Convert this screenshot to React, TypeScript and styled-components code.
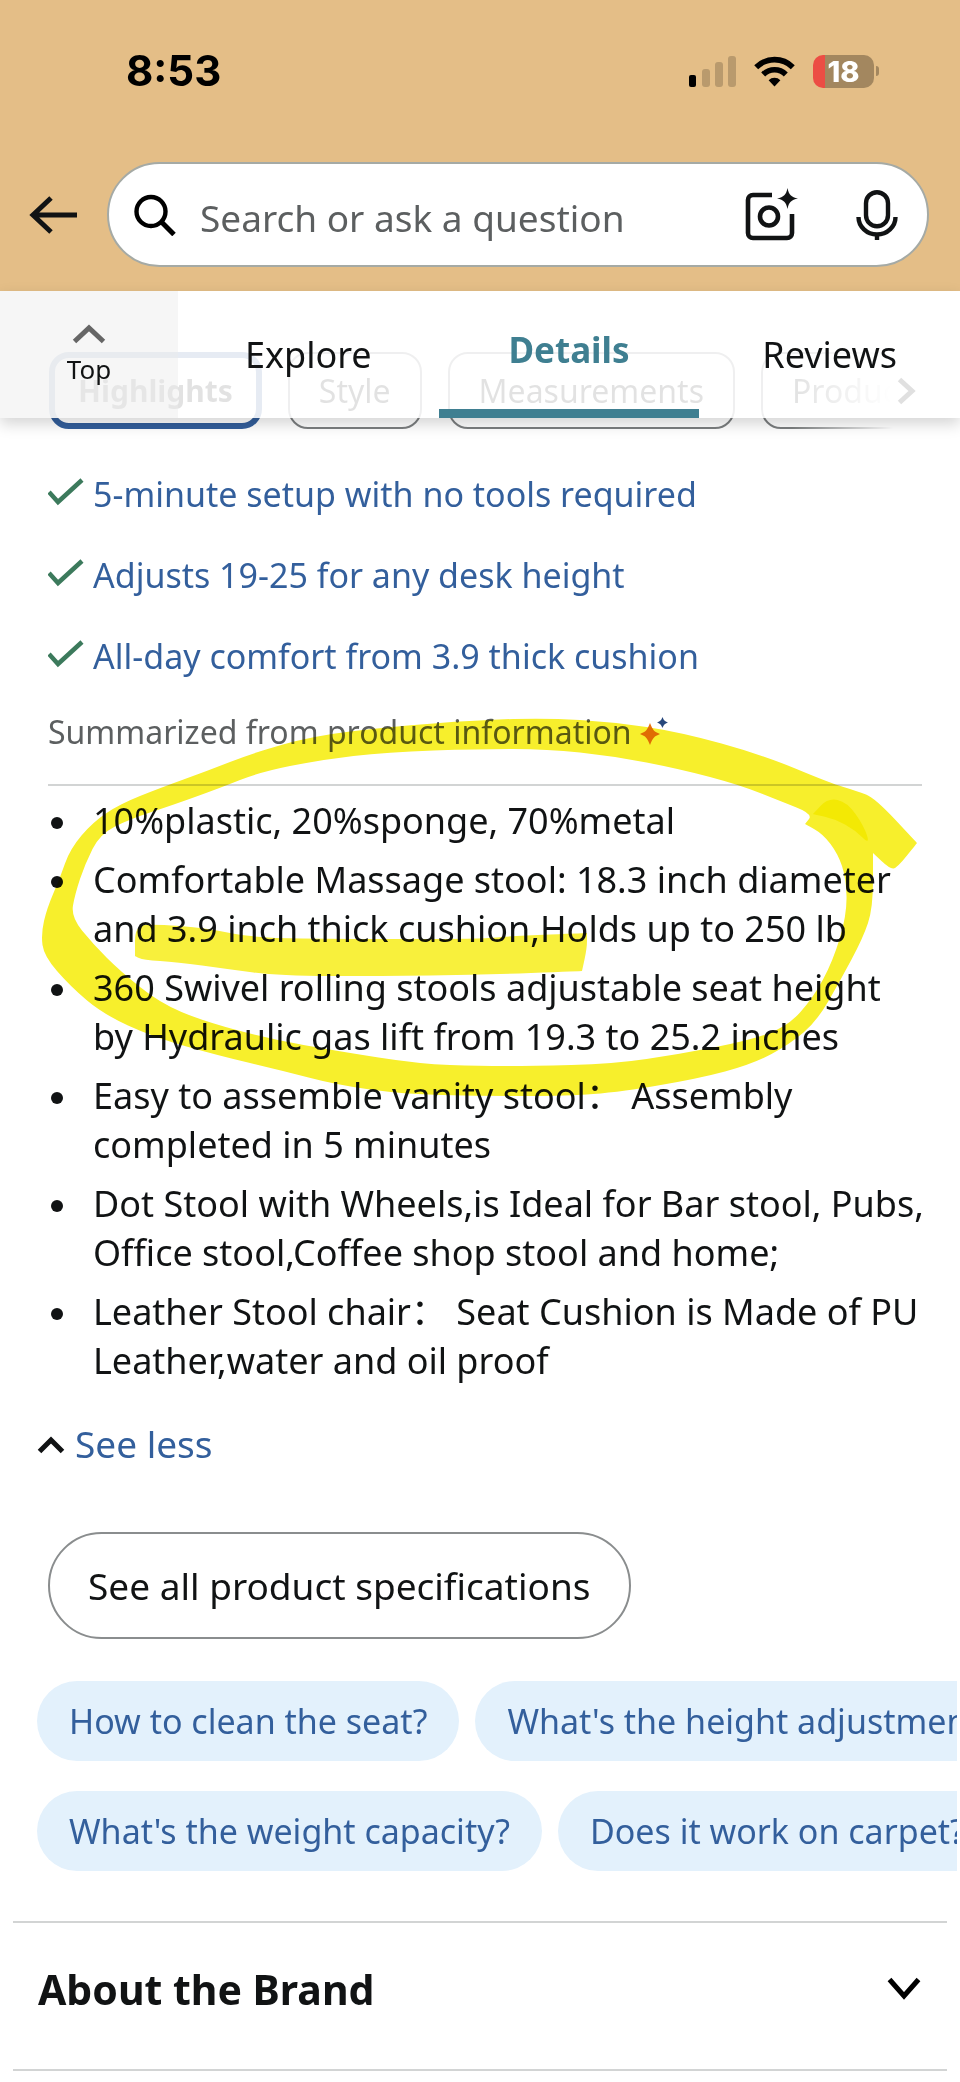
import React from "react";
import styled, { createGlobalStyle, css } from "styled-components";

const ink = "#111314";
const link = "#335f9c";
const teal = "#3f7f91";

const GlobalStyle = createGlobalStyle`
  * { box-sizing: border-box; }
  body {
    margin: 0;
    background: #fff;
    color: ${ink};
    font-family: "Noto Sans", "Noto Sans CJK SC", sans-serif;
  }
  button, input { font: inherit; color: inherit; }
  button { border: 0; padding: 0; background: none; cursor: pointer; }
  svg { display: block; flex: none; }
`;

const Page = styled.div`
  overflow: hidden;
`;

const Header = styled.header`
  background: #e4be87;
  padding-bottom: 24px;
`;

const StatusBar = styled.div`
  display: flex;
  align-items: center;
  justify-content: space-between;
  padding: 46px 81px 66px 126px;
  height: 162px;
`;

const Clock = styled.time`
  color: #000;
  font: 700 42px/50px Inter, sans-serif;
`;

const StatusIcons = styled.div`
  display: flex;
  align-items: center;
  gap: 18px;
`;

const Battery = styled.div`
  display: flex;
  align-items: center;
  gap: 2px;
`;

const BatteryBody = styled.div`
  width: 61px;
  height: 33px;
  border-radius: 10px;
  background: linear-gradient(90deg, #ec4d44 12px, #a3875f 12px);
  color: #fff;
  font: 800 29px/33px Inter, sans-serif;
  text-align: center;
`;

const BatteryTip = styled.span`
  width: 3px;
  height: 10px;
  border-radius: 0 3px 3px 0;
  background: #a3875f;
`;

const SearchRow = styled.div`
  display: flex;
  align-items: center;
  gap: 30px;
  padding: 0 31px 0 29px;
`;

const SearchPill = styled.form`
  flex: 1;
  min-width: 0;
  display: flex;
  align-items: center;
  height: 105px;
  padding: 0 29px 0 25px;
  border: 2px solid #a5aaa5;
  border-radius: 53px;
  background: #fff;
`;

const SearchInput = styled.input`
  flex: 1;
  min-width: 0;
  height: 60px;
  margin: 0 20px 0 24px;
  padding: 5px 0 0;
  border: 0;
  outline: 0;
  background: none;
  font-size: 37px;
  &::placeholder { color: #5c5f60; opacity: 1; }
`;

const MicButton = styled.button`
  margin-left: 57px;
`;

const TabStack = styled.section`
  position: relative;
  padding-top: 61px;
`;

const TabBar = styled.nav`
  position: absolute;
  inset: 0 0 auto;
  height: 127px;
  display: grid;
  grid-template-columns: 178px repeat(3, 1fr);
  background: rgba(255, 255, 255, 0.88);
  box-shadow: 0 6px 14px rgba(0, 0, 0, 0.17);
`;

const TopLink = styled.a`
  display: flex;
  flex-direction: column;
  align-items: center;
  gap: 8px;
  padding: 32px 0 0;
  background: rgba(235, 236, 236, 0.45);
  color: ${ink};
  font-size: 26px;
  line-height: 34px;
  text-decoration: none;
`;

const Tab = styled.a<{ $active?: boolean }>`
  display: flex;
  align-items: center;
  justify-content: center;
  color: ${ink};
  font-size: 36px;
  line-height: 48px;
  text-decoration: none;
  ${p => p.$active && css`
    border-bottom: 9px solid ${teal};
    color: ${teal};
    font-size: 35px;
    font-weight: 700;
  `}
`;

const FilterStrip = styled.div`
  display: flex;
  align-items: center;
  padding: 0 43px 0 49px;
`;

const Filters = styled.div`
  flex: 1;
  min-width: 0;
  display: flex;
  gap: 26px;
  overflow: hidden;
  mask-image: linear-gradient(90deg, #000 calc(100% - 105px), transparent calc(100% - 4px));
`;

const Filter = styled.button<{ $active?: boolean }>`
  flex: none;
  height: 77px;
  padding: 0 29px;
  border: 2px solid #7c7f80;
  border-radius: 20px;
  font-size: 32px;
  white-space: nowrap;
  ${p => p.$active && css`
    padding: 0 23px;
    border: 6px solid ${link};
    font-size: 30px;
    font-weight: 700;
  `}
`;

const Benefits = styled.ul`
  list-style: none;
  margin: 0;
  padding: 25px 38px 0 48px;
`;

const Benefit = styled.li`
  display: flex;
  align-items: center;
  gap: 9px;
  font-size: 34px;
  line-height: 81px;
  svg { margin-bottom: 6px; }
  a { color: ${link}; text-decoration: none; }
`;

const Annotated = styled.section`
  position: relative;
  margin-top: 15px;
  padding: 0 0 0 48px;
`;

const Marker = styled.svg`
  position: absolute;
  top: 0;
  left: 0;
  width: 100%;
  height: auto;
  mix-blend-mode: multiply;
  pointer-events: none;
`;

const Summary = styled.p`
  display: flex;
  align-items: center;
  gap: 8px;
  margin: 0 38px 0 0;
  padding-bottom: 32px;
  border-bottom: 2px solid #d2d4d4;
  color: #5c5f60;
  font-size: 32px;
  line-height: 40px;
`;

const Facts = styled.ul`
  display: grid;
  gap: 10px;
  margin: 0;
  padding: 10px 0 0;
  list-style: none;
`;

const Fact = styled.li`
  display: flex;
  font-size: 36px;
  line-height: 49px;
  white-space: pre-line;
  &::before {
    content: "";
    flex: none;
    width: 12px;
    height: 12px;
    margin: 21px 30px 0 3px;
    border-radius: 50%;
    background: ${ink};
  }
`;

const SeeLess = styled.button`
  display: flex;
  align-items: center;
  gap: 10px;
  margin: 35px 0 0 37px;
  color: ${link};
  font-size: 37px;
  line-height: 48px;
`;

const SpecsButton = styled.button`
  display: block;
  height: 107px;
  margin: 64px 0 0 48px;
  padding: 0 38px;
  border: 2px solid #8a8d8e;
  border-radius: 54px;
  font-size: 37px;
`;

const Questions = styled.div`
  display: grid;
  gap: 30px;
  margin: 42px 3px 50px 0;
  overflow: hidden;
`;

const QuestionRow = styled.div`
  display: flex;
  gap: 16px;
  padding-left: 37px;
`;

const Question = styled.button`
  flex: none;
  height: 80px;
  padding: 0 32px;
  border-radius: 40px;
  background: #e3f1fc;
  color: ${link};
  font-size: 34px;
  white-space: nowrap;
`;

const Brand = styled.section`
  margin: 0 13px;
  border: solid #d2d4d4;
  border-width: 2px 0;
`;

const BrandToggle = styled.button`
  display: flex;
  align-items: center;
  justify-content: space-between;
  width: 100%;
  padding: 38px 26px 52px 25px;
  font-weight: 700;
  line-height: 56px;
`;

const BrandTitle = styled.h2`
  margin: 0;
  font-size: 41px;
`;

type Point = [number, number];

/* Joins the points into one closed, softened outline. */
function outline(points: Point[]): string {
  const mid = (a: Point, b: Point) => `${(a[0] + b[0]) / 2} ${(a[1] + b[1]) / 2}`;
  const last = points[points.length - 1];
  return (
    `M${mid(last, points[0])}` +
    points.map((p, i) => `Q${p[0]} ${p[1]} ${mid(p, points[(i + 1) % points.length])}`).join("") +
    "Z"
  );
}

const loop: Point[] = [
  [917, 842], [917, 842], [875, 797], [857, 790], [830, 782], [763, 754], [680, 731], [613, 721], [547, 717], [480, 719],
  [387, 726], [313, 735], [253, 752], [207, 770], [160, 787], [120, 803], [93, 821], [70, 848],
  [60, 877], [47, 907], [41, 933], [44, 955], [70, 985], [103, 1013], [153, 1036], [220, 1055],
  [280, 1069], [337, 1084], [403, 1093], [480, 1095], [560, 1095], [613, 1092], [697, 1078], [753, 1063], [790, 1043],
  [817, 1020], [840, 980], [863, 937], [873, 907], [873, 852], [873, 852], [890, 868], [897, 867],
];

const loopHole: Point[] = [
  [813, 813], [805, 823], [805, 823], [823, 833], [838, 853], [846, 877], [847, 913], [833, 960], [813, 997], [787, 1026],
  [747, 1040], [680, 1053], [613, 1063], [530, 1065], [480, 1065], [420, 1063], [337, 1050],
  [270, 1038], [203, 1020], [160, 1002], [120, 970], [93, 943], [71, 916], [75, 893], [85, 863],
  [100, 833], [130, 818], [170, 805], [220, 787], [260, 771], [320, 759], [387, 751], [480, 748],
  [547, 748], [613, 755], [680, 768], [740, 784], [780, 800],
];

const overlap: Point[] = [
  [813, 813], [813, 813], [828, 797], [847, 801], [864, 825], [870, 844], [855, 829], [835, 818],
];

const underline: Point[] = [
  [135, 925], [153, 923], [207, 927], [253, 937], [350, 938], [480, 938], [513, 935], [587, 932], [587, 932],
  [587, 947], [582, 970], [582, 970], [480, 974], [380, 975], [280, 975], [227, 968], [177, 961], [143, 959],
  [135, 955], [135, 955],
];

const Check = () => (
  <svg width="36" height="28" viewBox="0 0 36 28" fill="none" stroke="#3c7a5c" strokeWidth="4.5" aria-hidden="true">
    <path d="M1 14 10 24 34 2" />
  </svg>
);

type ChevronProps = { dir: "up" | "down" | "right"; w: number; h: number; color: string; stroke: number };

const Chevron = ({ dir, w, h, color, stroke: s }: ChevronProps) => {
  const paths = {
    up: `M${s / 2} ${h - s / 2}L${w / 2} ${s}L${w - s / 2} ${h - s / 2}`,
    down: `M${s / 2} ${s / 2}L${w / 2} ${h - s}L${w - s / 2} ${s / 2}`,
    right: `M${s / 2} ${s / 2}L${w - s} ${h / 2}L${s / 2} ${h - s / 2}`,
  };
  return (
    <svg width={w} height={h} viewBox={`0 0 ${w} ${h}`} fill="none" stroke={color} strokeWidth={s} aria-hidden="true">
      <path d={paths[dir]} />
    </svg>
  );
};

const benefits = [
  "5-minute setup with no tools required",
  "Adjusts 19-25 for any desk height",
  "All-day comfort from 3.9 thick cushion",
];

const facts = [
  "10%plastic, 20%sponge, 70%metal",
  "Comfortable Massage stool: 18.3 inch diameter\nand 3.9 inch thick cushion,Holds up to 250 lb",
  "360 Swivel rolling stools adjustable seat height\nby Hydraulic gas lift from 19.3 to 25.2 inches",
  "Easy to assemble vanity stool： Assembly\ncompleted in 5 minutes",
  "Dot Stool with Wheels,is Ideal for Bar stool, Pubs,\nOffice stool,Coffee shop stool and home;",
  "Leather Stool chair： Seat Cushion is Made of PU\nLeather,water and oil proof",
];

const questions = [
  ["How to clean the seat?", "What's the height adjustment range?"],
  ["What's the weight capacity?", "Does it work on carpet?"],
];

export default function App() {
  return (
    <Page>
      <GlobalStyle />
      <Header>
        <StatusBar>
          <Clock>8:53</Clock>
          <StatusIcons>
            <svg width="47" height="31" viewBox="0 0 47 31" aria-label="Signal">
              <rect x="0" y="19" width="7" height="12" rx="2" fill="#000" />
              <g fill="#b99a6d">
                <rect x="13" y="13" width="8" height="18" rx="3" />
                <rect x="26" y="6" width="8" height="25" rx="3" />
                <rect x="39" y="0" width="8" height="31" rx="3" />
              </g>
            </svg>
            <svg width="41" height="31" viewBox="0 0 41 31" aria-label="Wi-Fi">
              <g fill="none" stroke="#000" strokeWidth="5.6">
                <path d="M2.2 11.2a26 26 0 0 1 36.6 0" />
                <path d="M9.2 18.4a16 16 0 0 1 22.6 0" />
              </g>
              <path d="M20.5 30.5 14.6 24.2a8.4 8.4 0 0 1 11.8 0Z" fill="#000" />
            </svg>
            <Battery>
              <BatteryBody>18</BatteryBody>
              <BatteryTip />
            </Battery>
          </StatusIcons>
        </StatusBar>
        <SearchRow>
          <button aria-label="Back">
            <svg width="48" height="38" viewBox="0 0 48 38" fill="none" stroke={ink} strokeWidth="5">
              <path d="M48 19H4M22 2 4 19 22 36" />
            </svg>
          </button>
          <SearchPill>
            <svg width="42" height="42" viewBox="0 0 42 42" fill="none" stroke="#000" strokeWidth="4.4" aria-hidden="true">
              <circle cx="17" cy="17.5" r="14.5" />
              <path d="M27.5 28 40 40.5" strokeWidth="5" />
            </svg>
            <SearchInput type="text" aria-label="Search" placeholder="Search or ask a question" />
            <button type="button" aria-label="Search with camera">
              <svg width="54" height="54" viewBox="0 0 54 54" fill="none" stroke={ink} strokeWidth="4.6">
                <path d="M27 7H8a5 5 0 0 0-5 5v33a5 5 0 0 0 5 5h34a5 5 0 0 0 5-5V26" />
                <circle cx="24" cy="28.5" r="9" />
                <path d="M42.5 0C44 7 46 9 53 10.5 46 12 44 14 42.5 21 41 14 39 12 32 10.5 39 9 41 7 42.5 0Z" fill={ink} stroke="none" />
              </svg>
            </button>
            <MicButton type="button" aria-label="Voice search">
              <svg width="42" height="50" viewBox="0 0 42 50" fill="none" stroke={ink} strokeWidth="4.4">
                <rect x="10" y="2.2" width="22" height="34" rx="11" />
                <path d="M2.5 27a18.5 17.5 0 0 0 37 0M21 44.5V50" />
              </svg>
            </MicButton>
          </SearchPill>
        </SearchRow>
      </Header>

      <TabStack>
        <FilterStrip>
          <Filters>
            <Filter $active>Highlights</Filter>
            <Filter>Style</Filter>
            <Filter>Measurements</Filter>
            <Filter>Product details</Filter>
          </Filters>
          <Chevron dir="right" w={20} h={28} color="#000" stroke={5} />
        </FilterStrip>
        <TabBar>
          <TopLink href="#top">
            <Chevron dir="up" w={34} h={21} color="#666" stroke={5} />
            Top
          </TopLink>
          <Tab href="#explore">Explore</Tab>
          <Tab href="#details" $active>Details</Tab>
          <Tab href="#reviews">Reviews</Tab>
        </TabBar>
      </TabStack>

      <main>
        <Benefits>
          {benefits.map(text => (
            <Benefit key={text}>
              <Check />
              <a href="#highlights">{text}</a>
            </Benefit>
          ))}
        </Benefits>

        <Annotated>
          <Summary>
            Summarized from product information
            <svg width="30" height="30" viewBox="0 0 30 30" aria-hidden="true">
              <path d="M10 6C13 13.5 14 14.5 20 17 14 19.5 13 20.5 10 28 7 20.5 6 19.5 0 17 6 14.5 7 13.5 10 6Z" fill="#e8730c" />
              <path d="M22.5 0C24 3.500 24.500 4 28 5.500 24.500 7 24 7.500 22.500 11 21 7.500 20.500 7 17 5.500 20.500 4 21 3.500 22.500 0Z" fill="#27477c" />
            </svg>
          </Summary>
          <Facts>
            {facts.map(text => (
              <Fact key={text}>
                <span>{text}</span>
              </Fact>
            ))}
          </Facts>
          <Marker viewBox="0 711 960 400" aria-hidden="true">
            <path d={outline(loop) + outline(loopHole)} fillRule="evenodd" fill="#f7ef2c" />
            <path d={outline(overlap)} fill="#f3e904" />
            <path d={outline(underline)} fill="#f8f03c" />
          </Marker>
        </Annotated>

        <SeeLess>
          <Chevron dir="up" w={28} h={19} color={ink} stroke={5} />
          See less
        </SeeLess>
        <SpecsButton>See all product specifications</SpecsButton>

        <Questions>
          {questions.map(row => (
            <QuestionRow key={row[0]}>
              {row.map(text => (
                <Question key={text}>{text}</Question>
              ))}
            </QuestionRow>
          ))}
        </Questions>

        <Brand>
          <BrandToggle aria-expanded="false">
            <BrandTitle>About the Brand</BrandTitle>
            <Chevron dir="down" w={34} h={24} color="#000" stroke={5} />
          </BrandToggle>
        </Brand>
      </main>
    </Page>
  );
}
